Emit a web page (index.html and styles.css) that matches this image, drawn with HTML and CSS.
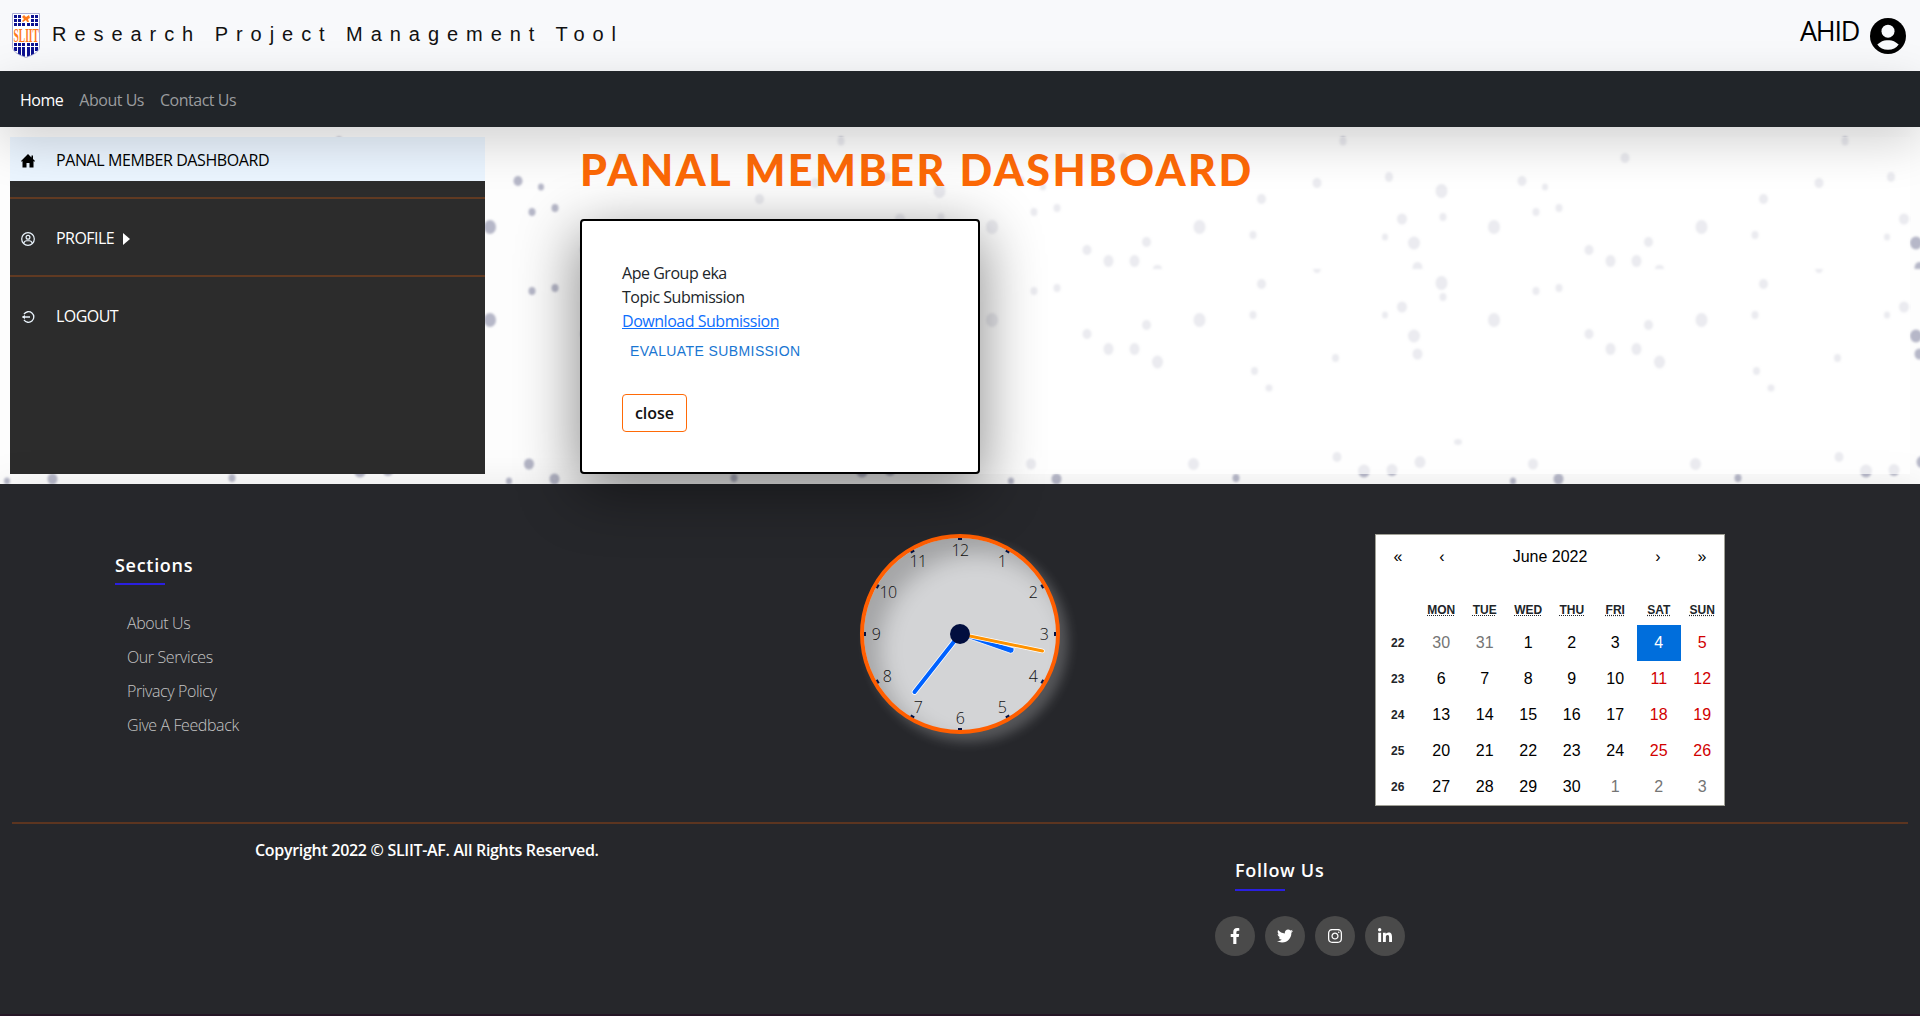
FILE: index.html
```html
<!DOCTYPE html>
<html lang="en">
<head>
<meta charset="utf-8">
<title>Research Project Management Tool</title>
<link rel="stylesheet" href="styles.css">
</head>
<body>
<header class="topbar">
  <svg class="logo" width="28" height="45" viewBox="0 0 28 45">
    <defs><clipPath id="shield"><path d="M1 1h26v33q0 6-13 10Q1 40 1 34z"/></clipPath></defs>
    <path d="M.5.5h27V34q0 6-13.500 10.500Q.5 40 .5 34z" fill="#fff" stroke="#a9acd4"/>
    <g clip-path="url(#shield)" fill="#0d1291">
      <path d="M2 2h3v3H2zm4 0h3v3H6zM2 6h3v3H2zm4 0h3v3H6zM2 10h3v3H2zm4 0h3v3H6zm4 0h3v3h-3zm5 0h3v3h-3zm4 0h3v3h-3zm4 0h3v3h-3zM19 2h3v3h-3zm4 0h3v3h-3zm-4 4h3v3h-3zm4 0h3v3h-3z"/>
      <path d="M2 30h3v3H2zm4 0h3v3H6zm4 0h3v3h-3zm5 0h3v3h-3zm4 0h3v3h-3zm4 0h3v3h-3zM2 34h3v4H2zm4 0h3v8H6zm4 0h3v10h-3zm5 0h3v10h-3zm4 0h3v8h-3zm4 0h3v4h-3z"/>
    </g>
    <path d="M10 4l2-2 2 2 3-2 1 3-2 1 1 3h-2l-1-2-3 2-1-1 2-2z" fill="#ff7a1c"/>
    <text transform="translate(1.500 28.500) scale(.53 1)" class="logo-text">SLIIT</text>
  </svg>
  <span class="brand">Research Project Management Tool</span>
  <span class="user">AHID</span>
  <svg class="avatar" width="36" height="36" viewBox="0 0 36 36"><circle cx="18" cy="18" r="18"/><circle cx="18" cy="13.200" r="6.500" fill="#f8fafd"/><path d="M7.300 26.500Q13 21.500 18 22.300q5-.8 10.700 4.200Q25 31.800 18 31.800T7.300 26.500z" fill="#f8fafd"/></svg>
</header>
<nav class="navbar"><a class="current">Home</a><a>About Us</a><a>Contact Us</a></nav>
<main class="main">
  <svg class="drops" viewBox="0 127 1920 357" width="1920" height="357">
    <defs>
      <filter id="soft" x="-5%" y="-5%" width="110%" height="110%"><feGaussianBlur stdDeviation="1"/></filter>
      <g id="tile">
        <ellipse cx="1343" cy="141" rx="3.500" ry="4.500"/><ellipse cx="1625" cy="158" rx="4.500" ry="5"/><ellipse cx="1317" cy="183" rx="4.500" ry="5"/><ellipse cx="1389" cy="177" rx="4" ry="5"/><ellipse cx="1441.500" cy="191" rx="6" ry="7"/><ellipse cx="1522" cy="181" rx="4.500" ry="5"/><ellipse cx="1545" cy="187" rx="3" ry="3.500"/><ellipse cx="1261.500" cy="199" rx="4.500" ry="5"/><ellipse cx="1402" cy="219" rx="5" ry="5.500"/><ellipse cx="1443" cy="217" rx="3.500" ry="4"/><ellipse cx="1536" cy="212" rx="3.500" ry="4"/><ellipse cx="1559" cy="208" rx="3.500" ry="4"/><ellipse cx="1494" cy="227" rx="6" ry="7"/><ellipse cx="1701.500" cy="227" rx="6" ry="7"/><ellipse cx="1253" cy="235" rx="3.500" ry="4"/><ellipse cx="1385" cy="237" rx="3" ry="3.500"/><ellipse cx="1414" cy="243" rx="6" ry="6.500"/><ellipse cx="1589" cy="250" rx="4.500" ry="5"/><ellipse cx="1648.500" cy="242" rx="4.500" ry="5"/><ellipse cx="1610.500" cy="261" rx="5" ry="6"/><ellipse cx="1636.500" cy="261" rx="5" ry="6"/>
        <path d="M1412.500 269q0-7 5-7t5 7zM1655 269q0-4 4.500-4t4.500 4zM1313 269h8q-1 4-4 4t-4-4z"/>
        <ellipse cx="1261.500" cy="284" rx="4.500" ry="5"/><ellipse cx="1441.500" cy="283" rx="6" ry="7"/><ellipse cx="1443" cy="297" rx="3.500" ry="4"/><ellipse cx="1536" cy="291" rx="3.500" ry="4"/><ellipse cx="1559" cy="288" rx="3.500" ry="4"/><ellipse cx="1402" cy="307" rx="5" ry="5.500"/><ellipse cx="1385" cy="315" rx="3" ry="3.500"/><ellipse cx="1253" cy="315" rx="3.500" ry="4"/><ellipse cx="1494" cy="320" rx="6" ry="7"/><ellipse cx="1701.500" cy="320" rx="6" ry="7"/><ellipse cx="1414" cy="336" rx="6" ry="6.500"/><ellipse cx="1589" cy="334" rx="4.500" ry="5"/><ellipse cx="1648.500" cy="325" rx="4.500" ry="5"/><ellipse cx="1417.500" cy="354" rx="5" ry="5.500"/><ellipse cx="1610.500" cy="349" rx="5" ry="6"/><ellipse cx="1636.500" cy="349" rx="5" ry="6"/><ellipse cx="1659.500" cy="362" rx="5.500" ry="6.500"/><ellipse cx="1335.500" cy="358" rx="3.500" ry="4"/><ellipse cx="1254.500" cy="371" rx="3.500" ry="4"/><ellipse cx="1269" cy="388" rx="3.500" ry="3.500"/>
        <ellipse cx="1458" cy="442" rx="4" ry="3"/><ellipse cx="1337" cy="457" rx="4.500" ry="5"/><ellipse cx="1364" cy="471" rx="6" ry="6.500"/><ellipse cx="1392" cy="470" rx="5.500" ry="6"/><ellipse cx="1420" cy="462" rx="5.500" ry="6"/><ellipse cx="1533" cy="464" rx="5" ry="5.500"/><ellipse cx="1695.500" cy="464" rx="5.500" ry="6"/><ellipse cx="1236" cy="478" rx="3.500" ry="4"/><ellipse cx="1513" cy="481" rx="3" ry="3.500"/><ellipse cx="1558.500" cy="479" rx="5" ry="5.500"/>
      </g>
    </defs>
    <g fill="#b6b7c8" filter="url(#soft)"><use href="#tile" x="-1506"/><use href="#tile" x="-1004"/><use href="#tile" x="-502"/><use href="#tile"/><use href="#tile" x="502"/></g>
  </svg>
  <aside class="sidebar">
    <a class="item active"><svg class="ico" width="14" height="14" viewBox="0 0 14 14"><path d="M7 0L0 7l.8.8L1.500 7v6.500h4V9h3v4.500h4V7l.7.8L14 7l-2-2.100V1.500h-1.500v1.900z"/></svg>PANAL MEMBER DASHBOARD</a>
    <hr>
    <a class="item"><svg class="ico" width="14" height="14" viewBox="0 0 16 16" fill="none" stroke="#eaf4fd" stroke-width="1.400"><circle cx="8" cy="8" r="7.200"/><circle cx="8" cy="6" r="2.200"/><path d="M3 13q1-3 3.500-3h3Q12 10 13 13"/></svg>PROFILE<i class="caret"></i></a>
    <hr>
    <a class="item"><svg class="ico" width="14" height="14" viewBox="0 0 14 14" fill="none" stroke="#eaf4fd" stroke-width="1.300"><path d="M3 4.200a5.300 5.300 0 1 1 0 5.600M1.800 7H9"/><path d="M.8 7L4 4.900v4.200z" fill="#eaf4fd" stroke="none"/></svg>LOGOUT</a>
  </aside>
  <section class="content">
    <h1 class="title">PANAL MEMBER DASHBOARD</h1>
    <article class="card">
      <p>Ape Group eka</p><p>Topic Submission</p><p><a class="download">Download Submission</a></p>
      <button class="evaluate">EVALUATE SUBMISSION</button>
      <button class="close">close</button>
    </article>
  </section>
</main>
<footer class="footer">
  <div class="upper">
    <div class="sections">
      <h2 class="heading">Sections</h2>
      <ul class="links"><li>About Us</li><li>Our Services</li><li>Privacy Policy</li><li>Give A Feedback</li></ul>
    </div>
    <div class="clock">
      <svg width="192" height="192" viewBox="-96 -96 192 192">
        <g stroke="#021042" stroke-width="4" stroke-dasharray="2 100">
          <path d="M0-96v10"/><path d="M0-96v10" transform="rotate(30)"/><path d="M0-96v10" transform="rotate(60)"/><path d="M0-96v10" transform="rotate(90)"/><path d="M0-96v10" transform="rotate(120)"/><path d="M0-96v10" transform="rotate(150)"/><path d="M0-96v10" transform="rotate(180)"/><path d="M0-96v10" transform="rotate(210)"/><path d="M0-96v10" transform="rotate(240)"/><path d="M0-96v10" transform="rotate(270)"/><path d="M0-96v10" transform="rotate(300)"/><path d="M0-96v10" transform="rotate(330)"/>
        </g>
        <g class="digits"><text x="0" y="-78">12</text><text x="42" y="-67">1</text><text x="73" y="-36">2</text><text x="84" y="6">3</text><text x="73" y="48">4</text><text x="42" y="79">5</text><text x="0" y="90">6</text><text x="-42" y="79">7</text><text x="-73" y="48">8</text><text x="-84" y="6">9</text><text x="-72" y="-36">10</text><text x="-42" y="-67">11</text></g>
        <g stroke-linecap="round">
          <path d="M0 0L-45.500 58" stroke="#fff" stroke-width="5.500"/><path d="M0 0L-45.500 58" stroke="#0062ff" stroke-width="4"/>
          <path d="M-.5 1.500L50.500 19.300Q54.500 19 54 14L.5-1z" fill="#0062ff" stroke="#fff" stroke-width=".8"/>
          <path d="M0 0L82.500 17" stroke="#fff" stroke-width="4.500"/><path d="M0 0L82.500 17" stroke="#ff9200" stroke-width="3"/>
        </g>
        <circle r="10" fill="#010e3f"/>
      </svg>
    </div>
    <div class="calendar">
      <div class="cal-nav"><b>«</b><b>‹</b><span>June 2022</span><b>›</b><b>»</b></div>
      <div class="cal-grid names"><span></span><abbr title="Monday">MON</abbr><abbr title="Tuesday">TUE</abbr><abbr title="Wednesday">WED</abbr><abbr title="Thursday">THU</abbr><abbr title="Friday">FRI</abbr><abbr title="Saturday">SAT</abbr><abbr title="Sunday">SUN</abbr></div>
      <div class="cal-grid days">
        <b>22</b><i>30</i><i>31</i><span>1</span><span>2</span><span>3</span><span class="today">4</span><em>5</em>
        <b>23</b><span>6</span><span>7</span><span>8</span><span>9</span><span>10</span><em>11</em><em>12</em>
        <b>24</b><span>13</span><span>14</span><span>15</span><span>16</span><span>17</span><em>18</em><em>19</em>
        <b>25</b><span>20</span><span>21</span><span>22</span><span>23</span><span>24</span><em>25</em><em>26</em>
        <b>26</b><span>27</span><span>28</span><span>29</span><span>30</span><i>1</i><i>2</i><i>3</i>
      </div>
    </div>
  </div>
  <hr class="divider">
  <div class="lower">
    <p class="copyright">Copyright 2022 © SLIIT-AF. All Rights Reserved.</p>
    <div class="follow">
      <h2 class="heading follow-heading">Follow Us</h2>
      <div class="social">
        <a><svg height="16" viewBox="0 0 320 512"><path d="M279.140 288l14.220-92.660h-88.910v-60.130c0-25.350 12.420-50.060 52.240-50.060h40.420V6.260S260.430 0 225.360 0c-73.220 0-121.080 44.380-121.080 124.720v70.620H22.890V288h81.390v224h100.170V288z"/></svg></a>
        <a><svg height="16" viewBox="0 0 512 512"><path d="M459.370 151.716c.325 4.548.325 9.097.325 13.645 0 138.720-105.583 298.558-298.558 298.558-59.452 0-114.680-17.219-161.137-47.106 8.447.974 16.568 1.299 25.340 1.299 49.055 0 94.213-16.568 130.274-44.832-46.132-.975-84.792-31.188-98.112-72.772 6.498.974 12.995 1.624 19.818 1.624 9.421 0 18.843-1.300 27.614-3.573-48.081-9.747-84.143-51.980-84.143-102.985v-1.299c13.969 7.797 30.214 12.670 47.431 13.319-28.264-18.843-46.781-51.005-46.781-87.391 0-19.492 5.197-37.360 14.294-52.954 51.655 63.675 129.300 105.258 216.365 109.807-1.624-7.797-2.599-15.918-2.599-24.040 0-57.828 46.782-104.934 104.934-104.934 30.213 0 57.502 12.670 76.670 33.137 23.715-4.548 46.456-13.320 66.599-25.340-7.798 24.366-24.366 44.833-46.132 57.827 21.117-2.273 41.584-8.122 60.426-16.243-14.292 20.791-32.161 39.308-52.628 54.253z"/></svg></a>
        <a><svg height="16" viewBox="0 0 448 512"><path d="M224.100 141c-63.600 0-114.900 51.300-114.900 114.900s51.300 114.900 114.900 114.900S339 319.500 339 255.900 287.700 141 224.100 141zm0 189.600c-41.100 0-74.700-33.500-74.700-74.700s33.500-74.700 74.700-74.700 74.700 33.500 74.700 74.700-33.600 74.700-74.700 74.700zm146.400-194.300c0 14.900-12 26.800-26.800 26.800-14.900 0-26.800-12-26.800-26.800s12-26.800 26.800-26.800 26.800 12 26.800 26.800zm76.100 27.200c-1.700-35.900-9.900-67.700-36.200-93.900-26.200-26.200-58-34.400-93.900-36.200-37-2.100-147.900-2.100-184.900 0-35.800 1.700-67.600 9.900-93.900 36.100s-34.400 58-36.200 93.900c-2.100 37-2.100 147.900 0 184.900 1.700 35.900 9.900 67.700 36.200 93.900s58 34.400 93.900 36.200c37 2.100 147.900 2.100 184.900 0 35.900-1.700 67.700-9.900 93.900-36.200 26.200-26.200 34.400-58 36.200-93.900 2.100-37 2.100-147.800 0-184.800zM398.800 388c-7.800 19.600-22.900 34.700-42.600 42.600-29.500 11.700-99.500 9-132.100 9s-102.700 2.600-132.100-9c-19.600-7.800-34.700-22.900-42.600-42.600-11.700-29.500-9-99.500-9-132.100s-2.600-102.700 9-132.100c7.800-19.600 22.900-34.700 42.600-42.600 29.500-11.700 99.500-9 132.100-9s102.700-2.600 132.100 9c19.600 7.800 34.700 22.900 42.600 42.600 11.700 29.500 9 99.500 9 132.100s2.700 102.700-9 132.100z"/></svg></a>
        <a><svg height="16" viewBox="0 0 448 512"><path d="M100.280 448H7.400V148.900h92.880zM53.790 108.100C24.090 108.100 0 83.500 0 53.800a53.790 53.790 0 0 1 107.580 0c0 29.700-24.100 54.300-53.790 54.300zM447.900 448h-92.680V302.400c0-34.700-.7-79.200-48.290-79.200-48.290 0-55.690 37.700-55.690 76.700V448h-92.780V148.900h89.080v40.800h1.300c12.400-23.500 42.690-48.300 87.880-48.300 94 0 111.280 61.900 111.280 142.300V448z"/></svg></a>
      </div>
    </div>
  </div>
</footer>
</body>
</html>
```
FILE: styles.css
```css
* { box-sizing: border-box; }
body { margin: 0; width: 1920px; height: 1016px; overflow: hidden; font: 16px/24px "Open Sans", "Noto Sans", sans-serif; color: #212529; background: #2a1a2b; }
h1, h2, p, ul { margin: 0; padding: 0; }
button { font: inherit; background: none; }

.topbar { height: 71px; display: flex; align-items: center; padding: 0 14px 0 12px; background: #f8f9fb; }
.logo { margin-right: 12px; }
.logo-text { font: bold 18px "Liberation Serif", serif; fill: #ff7a1c; }
.brand { font: 20px/24px "Liberation Sans", sans-serif; letter-spacing: 7.95px; color: #111; padding-bottom: 3px; }
.user { margin-left: auto; margin-right: 11px; padding-bottom: 10px; font-size: 27px; letter-spacing: -1.300px; color: #000; }

.navbar { position: relative; z-index: 2; height: 56px; display: flex; align-items: center; gap: 16px; padding: 1px 20px 0; background: #212529; color: #9a9c9e; letter-spacing: -.48px; box-shadow: 0 16px 48px rgba(0, 0, 0, .175); }
.current { color: #fff; }

.main { position: relative; height: 357px; display: flex; gap: 95px; padding: 10px; background: #fdfdfd; }
.drops { position: absolute; left: 0; top: 0; }
.sidebar { position: relative; width: 475px; background: #2c2c2c; color: #fff; letter-spacing: -.55px; }
.item { display: flex; align-items: center; height: 44px; padding: 1px 0 0 11px; }
.item.active { background: #ebf5ff; color: #000; letter-spacing: -.4px; }
.ico { margin: 3px 21px 0 0; }
.sidebar hr { margin: 16px 0; border: 0; height: 2px; background: #613a22; }
.caret { margin: 3px 0 0 9px; border-left: 7px solid #fff; border-top: 6px solid transparent; border-bottom: 6px solid transparent; }

.content { position: relative; z-index: 1; flex: 1; display: flex; flex-direction: column; background: rgba(255, 255, 255, .72); }
.title { height: 82px; padding-top: 8px; font: 900 43px/50px Lato, sans-serif; letter-spacing: 2.450px; white-space: nowrap; color: #ff6a07; }
.card { width: 400px; height: 255px; display: flex; flex-direction: column; align-items: flex-start; padding: 40px; background: #fff; border: 2px solid #000; border-radius: 4px; letter-spacing: -.47px; box-shadow: 0 16px 60px 2px rgba(0, 0, 0, .46); }
.download { color: #0d6efd; text-decoration: underline; }
.evaluate { border: 0; margin-top: 6px; padding: 0 8px; color: #1976d2; font: 14px/24px "Liberation Sans", sans-serif; letter-spacing: .4px; }
.close { margin-top: 31px; width: 65px; height: 38px; padding: 0; border: 1px solid #ff6a07; border-radius: 4px; font-weight: 600; color: #111; letter-spacing: 0; }

.footer { position: relative; height: 530px; padding: 50px 12px 0; background: #26272b; box-shadow: 0 16px 48px rgba(0, 0, 0, .175); }
.upper { display: grid; grid-template-columns: 848px 200px 665px; height: 288px; align-items: start; }
.sections { padding: 18px 0 0 103px; }
.heading { width: 120px; padding-bottom: 7px; font-size: 18px; line-height: 26px; font-weight: 600; letter-spacing: .7px; color: #fff; white-space: nowrap; background: linear-gradient(#2a1fe0, #2a1fe0) left bottom / 50px 2px no-repeat; }
.links { list-style: none; margin-top: 21px; padding-left: 12px; line-height: 34px; font-weight: 300; color: #c4c4c4; letter-spacing: -.4px; }
.clock { width: 200px; height: 200px; border: 4px solid #ff5e00; border-radius: 50%; background: #d3d4d6; box-shadow: 8px 8px 12px rgba(255, 255, 255, .22), inset 16px 16px 22px rgba(0, 0, 0, .22); }
.clock svg { display: block; }
.digits { font: 300 16px "Open Sans", sans-serif; letter-spacing: -.5px; text-anchor: middle; fill: #111; }
.calendar { width: 350px; height: 272px; margin-left: 315px; border: 1px solid #a0a096; background: #fff; font: 16px/36px "Liberation Sans", sans-serif; color: #000; text-align: center; }
.cal-nav { display: grid; grid-template-columns: 44px 44px 1fr 44px 44px; line-height: 43px; height: 60px; }
.cal-nav b { font-weight: 400; }
.cal-grid { display: grid; grid-template-columns: repeat(8, 43.500px); align-items: center; }
.names { height: 30px; font-size: 12px; line-height: 18px; font-weight: 700; color: #212529; }
.names abbr { text-decoration: underline dotted; }
.days { grid-auto-rows: 36px; }
.days b { font-size: 12px; color: #212529; }
.days i { font-style: normal; color: #757575; }
.days em { font-style: normal; color: #d10000; }
.today { background: #006edc; color: #fff; }
.divider { margin: 0; border: 0; height: 2px; background: #5c3520; }
.lower { display: flex; }
.copyright { width: 960px; padding: 14px 0 0 243px; font-size: 16px; font-weight: 600; color: #fff; letter-spacing: -.3px; }
.follow { padding: 33px 0 0 243px; }
.follow-heading { margin-left: 20px; padding-bottom: 8px; }
.social { display: flex; gap: 10px; margin-top: 25px; }
.social a { display: grid; place-items: center; width: 40px; height: 40px; border-radius: 50%; background: #4a4a4a; }
.social svg { fill: #fff; }
```
